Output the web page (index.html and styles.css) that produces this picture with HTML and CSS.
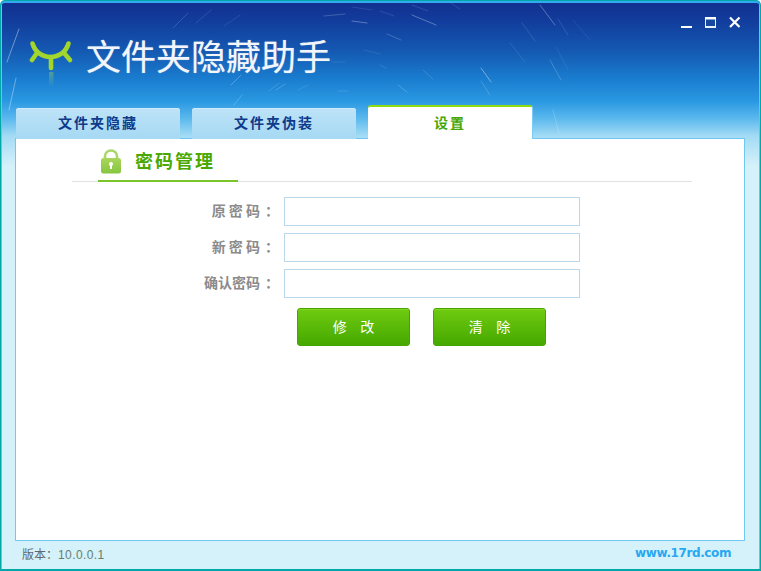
FILE: index.html
```html
<!DOCTYPE html>
<html lang="zh-CN">
<head>
<meta charset="utf-8">
<title>文件夹隐藏助手</title>
<link rel="stylesheet" href="styles.css">
</head>
<body>
<div class="window">
  <svg class="streaks" width="761" height="140" viewBox="0 0 761 140" aria-hidden="true">
    <g stroke="#ffffff" stroke-linecap="round" fill="none">
      <path d="M7 62 L19 29" stroke-opacity=".4"/>
      <path d="M9 110 L16 78" stroke-opacity=".35"/>
      <path d="M173 28 L188 13" stroke-opacity=".15"/>
      <path d="M196 23 L211 10" stroke-opacity=".12"/>
      <path d="M224 26 L240 15" stroke-opacity=".1"/>
      <path d="M231 85 L241 75" stroke-opacity=".25"/>
      <path d="M269 91 L279 83" stroke-opacity=".15"/>
      <path d="M276 90 L285 84" stroke-opacity=".2"/>
      <path d="M234 105 L242 95" stroke-opacity=".2"/>
      <path d="M298 90 L308 85" stroke-opacity=".1"/>
      <path d="M324 16 L345 14" stroke-opacity=".2"/>
      <path d="M352 21 L367 23" stroke-opacity=".3"/>
      <path d="M352 7 L372 10" stroke-opacity=".1"/>
      <path d="M364 50 L380 54" stroke-opacity=".1"/>
      <path d="M332 62 L345 62" stroke-opacity=".1"/>
      <path d="M338 91 L348 91" stroke-opacity=".12"/>
      <path d="M380 11 L394 16" stroke-opacity=".12"/>
      <path d="M412 15 L436 25" stroke-opacity=".3"/>
      <path d="M412 5 L428 11" stroke-opacity=".12"/>
      <path d="M451 3 L460 9" stroke-opacity=".12"/>
      <path d="M387 34 L401 40" stroke-opacity=".2"/>
      <path d="M380 65 L386 68" stroke-opacity=".12"/>
      <path d="M423 70 L433 79" stroke-opacity=".15"/>
      <path d="M398 85 L407 92" stroke-opacity=".2"/>
      <path d="M481 68 L491 82" stroke-opacity=".4"/>
      <path d="M481 81 L490 95" stroke-opacity=".18"/>
      <path d="M540 5 L555 25" stroke-opacity=".3"/>
      <path d="M558 19 L568 35" stroke-opacity=".12"/>
      <path d="M522 23 L535 41" stroke-opacity=".12"/>
      <path d="M510 43 L525 62" stroke-opacity=".1"/>
      <path d="M550 60 L561 80" stroke-opacity=".2"/>
      <path d="M556 47 L568 70" stroke-opacity=".08"/>
      <path d="M553 110 L559 133" stroke-opacity=".18"/>
      <path d="M573 20 L590 40" stroke-opacity=".08"/>
    </g>
  </svg>
  <header class="banner">
    <div class="brand">
      <svg class="eye" width="46" height="48" viewBox="0 0 46 48" aria-hidden="true">
        <defs>
          <linearGradient id="reflect" x1="0" y1="0" x2="0" y2="1">
            <stop offset="0" stop-color="#a8d84a" stop-opacity=".4"/>
            <stop offset="1" stop-color="#a8d84a" stop-opacity="0"/>
          </linearGradient>
        </defs>
        <g fill="none" stroke="#a2d62d" stroke-width="4.600" stroke-linecap="round">
          <path d="M3.500 4.500 C6 13 13 18 21.500 18 C30 18 37 13 39.500 4.500"/>
          <path d="M8 14 L3 21"/>
          <path d="M35 14 L41 21"/>
          <path d="M22 18 V29"/>
        </g>
        <rect x="20" y="33" width="4.500" height="15" fill="url(#reflect)"/>
      </svg>
      <h1 class="title">文件夹隐藏助手</h1>
    </div>
    <div class="controls">
      <svg width="13" height="13" viewBox="0 0 13 13" aria-hidden="true"><rect x="1" y="10" width="11" height="2" fill="#fff"/></svg>
      <svg width="13" height="13" viewBox="0 0 13 13" aria-hidden="true"><rect x="1.500" y="1.500" width="10" height="10" fill="#16479f" stroke="#e8f2fb"/><rect x="1" y="1" width="11" height="2.500" fill="#fff"/><rect x="1" y="10" width="11" height="2" fill="#e8f2fb"/></svg>
      <svg width="13" height="13" viewBox="0 0 13 13" aria-hidden="true"><path d="M2 1.500 L11.500 11 M11.500 1.500 L2 11" stroke="#fff" stroke-width="2.200" fill="none"/></svg>
    </div>
    <nav class="tabs">
      <a class="tab">文件夹隐藏</a>
      <a class="tab">文件夹伪装</a>
      <a class="tab tab-active">设置</a>
    </nav>
  </header>
  <main class="panel">
    <div class="section-head">
      <div class="section-title">
        <svg width="22" height="25" viewBox="0 0 22 25" aria-hidden="true">
          <defs>
            <linearGradient id="lockBody" x1="0" y1="0" x2="0" y2="1">
              <stop offset="0" stop-color="#a9d65b"/>
              <stop offset="1" stop-color="#85c540"/>
            </linearGradient>
          </defs>
          <path d="M5 10 V7 A6 5.500 0 0 1 17 7 V10" fill="none" stroke="#a9d668" stroke-width="2.600"/>
          <rect x="1" y="9" width="20" height="15.500" rx="2.500" fill="url(#lockBody)"/>
          <circle cx="11" cy="15" r="2" fill="#fff"/>
          <rect x="10" y="15" width="2" height="5" fill="#fff"/>
        </svg>
        <h2 class="section-name">密码管理</h2>
      </div>
    </div>
    <form class="form">
      <label class="label">原 密 码<span class="colon">：</span></label><input class="field" type="password">
      <label class="label">新 密 码<span class="colon">：</span></label><input class="field" type="password">
      <label class="label">确认密码<span class="colon">：</span></label><input class="field" type="password">
      <div class="actions">
        <button class="btn" type="button">修&nbsp;&nbsp;改</button>
        <button class="btn" type="button">清&nbsp;&nbsp;除</button>
      </div>
    </form>
  </main>
  <footer class="status">
    <span class="version"><span class="version-key">版本：</span>10.0.0.1</span>
    <span class="site">www.17rd.com</span>
  </footer>
</div>
</body>
</html>
```

FILE: styles.css
```css
* { box-sizing: border-box; }
html, body { margin: 0; padding: 0; }
body { width: 761px; height: 571px; overflow: hidden; font-family: "Noto Sans CJK SC", "Liberation Sans", sans-serif; }

.window {
  position: relative;
  width: 761px;
  height: 571px;
  display: flex;
  flex-direction: column;
  border: 1px solid #00a8a8;
  border-bottom-width: 2px;
  border-radius: 5px 5px 0 0;
  box-shadow: inset 0 2px 0 #35a9ee, inset 1px 0 0 #63c4f0, inset -1px 0 0 #63c4f0;
  background: linear-gradient(180deg, #122f8e 0, #123d9d 20px, #1459b2 50px, #1a7dcf 78px, #2a98e2 100px, #5db9ee 118px, #a3dbf5 135px, #d5f1fa 165px, #d5f1fa 100%);
}
.streaks { position: absolute; left: -1px; top: -1px; pointer-events: none; }

.banner {
  position: relative;
  height: 137px;
  flex: none;
  display: flex;
  flex-direction: column;
  justify-content: flex-end;
}
.brand {
  position: absolute;
  left: 28px;
  top: 38px;
  display: flex;
  align-items: flex-start;
  gap: 11px;
}
.eye { flex: none; }
.title {
  margin: -6px 0 0;
  font-size: 35px;
  line-height: 44px;
  font-weight: 400;
  color: #f2f5fa;
  white-space: nowrap;
  text-shadow: 0 0 1px rgba(255, 255, 255, .5);
}
.controls {
  position: absolute;
  right: 19px;
  top: 15px;
  display: flex;
  gap: 11px;
}
.controls svg { display: block; }

.tabs {
  display: flex;
  align-items: flex-end;
  padding-left: 15px;
  gap: 12px;
  position: relative;
  z-index: 1;
  margin-bottom: -1px;
}
.tab {
  width: 164px;
  height: 31px;
  line-height: 28px;
  text-align: center;
  font-size: 14px;
  font-weight: 700;
  letter-spacing: 2px;
  color: #0f3a8a;
  border-radius: 3px 3px 0 0;
  background: linear-gradient(180deg, #bde3f7, #a6d9f4);
  box-shadow: inset 0 1px 0 #d0ecfa;
}
.tab-active {
  width: 165px;
  height: 34px;
  line-height: 31px;
  color: #46a606;
  background: #fff;
  border-top: 2px solid #8fdc0c;
  border-right: 1px solid #7ccbf2;
  box-shadow: none;
}

.panel {
  flex: 1;
  margin: 0 15px 0 14px;
  background: #fff;
  border: 1px solid #70c8f2;
  padding-top: 0;
}
.section-head {
  margin: 0 52px 0 56px;
  height: 43px;
  border-bottom: 1px solid #e2e2e2;
  position: relative;
}
.section-title {
  width: 140px;
  margin-left: 26px;
  height: 43px;
  padding: 10px 0 0 2px;
  display: flex;
  align-items: flex-start;
  gap: 13px;
  border-bottom: 2px solid #7ac52a;
}
.section-title svg { display: block; flex: none; }
.section-name {
  margin: -2px 0 0;
  font-size: 18px;
  line-height: 27px;
  font-weight: 700;
  letter-spacing: 2px;
  color: #4aa800;
  white-space: nowrap;
}

.form {
  display: grid;
  grid-template-columns: 260px 296px;
  column-gap: 8px;
  row-gap: 7px;
  margin-top: 15px;
  justify-content: start;
}
.label {
  justify-self: end;
  font-size: 14px;
  line-height: 27px;
  font-weight: 700;
  color: #8b8b8b;
  white-space: pre;
}
.colon { font-family: "Noto Sans CJK TC", sans-serif; margin-left: 5px; margin-right: -3px; }
.field {
  width: 296px;
  height: 29px;
  border: 1px solid #bcd9ec;
  background: #fff;
  outline: none;
  padding: 0 4px;
}
.actions {
  grid-column: 2;
  display: flex;
  gap: 23px;
  margin: 3px 0 0 13px;
}
.btn {
  width: 113px;
  height: 38px;
  padding: 0 0 3px;
  font: 400 14px/32px "Noto Sans CJK SC", sans-serif;
  word-spacing: 3.500px;
  color: #fff;
  border: 1px solid #46a400;
  border-radius: 3px;
  background: linear-gradient(180deg, #6fcb10, #46a800);
  box-shadow: inset 0 1px 0 #84d61e;
}

.status {
  flex: none;
  height: 28px;
  display: flex;
  justify-content: space-between;
  align-items: flex-start;
  padding: 4px 29px 0 21px;
  font-size: 12px;
  line-height: 18px;
}
.version { color: #64806e; font-family: "Liberation Sans", "Noto Sans CJK SC", sans-serif; letter-spacing: .4px; }
.version-key { color: #60686e; font-family: "Noto Sans CJK SC", sans-serif; letter-spacing: 0; }
.site { color: #29a8f2; font: 700 12px/18px "DejaVu Sans", sans-serif; letter-spacing: -.4px; margin-top: -1px; }
```
